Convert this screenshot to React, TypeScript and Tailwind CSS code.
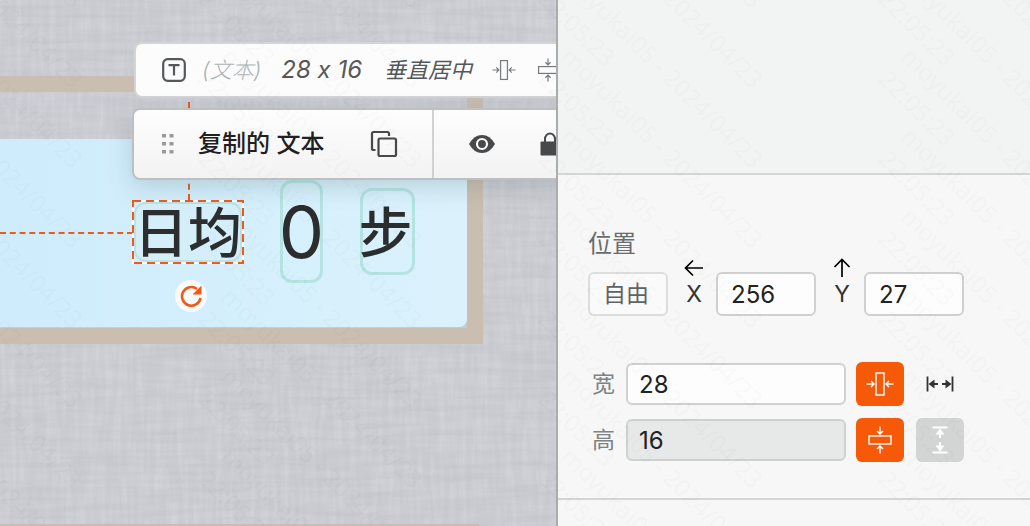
import { useState, type ReactNode } from "react";

type IconProps = { className?: string };

const cjk = "font-['Inter','Noto_Sans_CJK_SC',sans-serif]";

function ShrinkIcon({ className = "" }: IconProps) {
  return (
    <svg viewBox="0 0 28 28" className={className} fill="none" stroke="currentColor" strokeWidth="1.4" aria-hidden="true">
      <rect x="10" y="3" width="8" height="22" />
      <path d="M0.5 14H8M5 11l3 3-3 3M27.5 14H20M23 11l-3 3 3 3" />
    </svg>
  );
}

function StretchIcon({ className = "" }: IconProps) {
  return (
    <svg viewBox="0 0 28 28" className={className} fill="none" stroke="currentColor" strokeWidth="1.8" aria-hidden="true">
      <path d="M1.5 6.5v15M26.5 6.5v15M5 14h7M16 14h7" />
      <path d="M2.5 14l6-4.5v9zM25.5 14l-6-4.5v9z" fill="currentColor" stroke="none" />
    </svg>
  );
}

function TextTypeIcon() {
  return (
    <svg viewBox="0 0 24 24" className="size-6 shrink-0 text-[#55585a]" fill="none" stroke="currentColor" strokeWidth="2.2" aria-hidden="true">
      <rect x="1.2" y="1.2" width="21.6" height="21.6" rx="4.5" />
      <path d="M6.5 7.2h11M12 7v10.500" />
    </svg>
  );
}

function CopyIcon() {
  return (
    <svg viewBox="0 0 28 28" className="size-7" fill="none" stroke="currentColor" strokeWidth="2.2" aria-hidden="true">
      <path d="M5.5 20H3.5A1.5 1.5 0 0 1 2 18.5V3.500A1.500 1.500 0 0 1 3.500 2H17.500A1.500 1.500 0 0 1 19 3.500V6" />
      <rect x="8.500" y="8.500" width="17.500" height="17.500" rx="1.500" />
    </svg>
  );
}

function EyeIcon() {
  return (
    <svg viewBox="0 0 28 20" className="h-5 w-7" aria-hidden="true">
      <path d="M1 10Q6 1 14 1t13 9q-5 9-13 9T1 10z" fill="currentColor" />
      <circle cx="14" cy="10" r="5" fill="currentColor" stroke="#fbfbfb" strokeWidth="2.2" />
    </svg>
  );
}

function LockIcon() {
  return (
    <svg viewBox="0 0 20 24" className="h-6 w-5" aria-hidden="true">
      <path d="M5 10V7a5 5.500 0 0 1 10 0v3" fill="none" stroke="currentColor" strokeWidth="2" />
      <rect x="0.500" y="9.500" width="19" height="14" rx="1" fill="currentColor" />
    </svg>
  );
}

function GripIcon() {
  return (
    <svg viewBox="0 0 12 20" className="h-5 w-3 text-[#999]" fill="currentColor" aria-hidden="true">
      <path d="M0 0h4v3.500H0zM7.500 0h4v3.500h-4zM0 8h4v3.500H0zM7.500 8h4v3.500h-4zM0 16h4v3.500H0zM7.500 16h4v3.500h-4z" />
    </svg>
  );
}

function RotateIcon() {
  return (
    <svg viewBox="0 0 24 24" className="size-6" aria-hidden="true">
      <path d="M21.500 14A9.300 9.300 0 1 1 18 5" fill="none" stroke="currentColor" strokeWidth="2.600" />
      <path d="M22.500 1.500v9h-9z" fill="currentColor" />
    </svg>
  );
}

function ArrowIcon({ className = "" }: IconProps) {
  return (
    <svg viewBox="0 0 20 20" className={`size-5 text-black ${className}`} fill="none" stroke="currentColor" strokeWidth="1.700" aria-hidden="true">
      <path d="M19 10H2M9 2.500L1.500 10l7.500 7.500" />
    </svg>
  );
}

function Fabric() {
  return (
    <svg className="absolute inset-0 size-full" aria-hidden="true">
      <filter id="warp" x="0" y="0" width="100%" height="100%" colorInterpolationFilters="sRGB">
        <feTurbulence type="fractalNoise" baseFrequency="0.18 0.020" numOctaves="2" seed="4" />
        <feColorMatrix values="0 0 0 0 0.860  0 0 0 0 0.870  0 0 0 0 0.890  1.600 0 0 0 -0.600" />
      </filter>
      <filter id="weft" x="0" y="0" width="100%" height="100%" colorInterpolationFilters="sRGB">
        <feTurbulence type="fractalNoise" baseFrequency="0.014 0.160" numOctaves="2" seed="9" />
        <feColorMatrix values="0 0 0 0 0.720  0 0 0 0 0.730  0 0 0 0 0.750  1.600 0 0 0 -0.600" />
      </filter>
      <rect width="100%" height="100%" filter="url(#warp)" opacity="0.600" />
      <rect width="100%" height="100%" filter="url(#weft)" opacity="0.450" />
    </svg>
  );
}

function Watermark() {
  const marks = [];
  for (let col = -1; col < 3; col++) {
    for (let row = -3; row < 6; row++) {
      marks.push(
        <g key={`${col}:${row}`} transform={`translate(${220 + col * 340} ${58 + row * 80}) rotate(45)`}>
          <text>moyukai05 - 2024/04/23</text>
          <text y="32">22:05:23</text>
        </g>,
      );
    }
  }
  return (
    <svg className="pointer-events-none fixed inset-0 size-full fill-black font-['Noto_Sans',sans-serif] text-[24px] opacity-[0.015]" aria-hidden="true">
      {marks}
    </svg>
  );
}

function CanvasArea() {
  return (
    <main className="relative min-w-0 flex-1 overflow-hidden bg-[#cbccd2]">
      <Fabric />

      <div className="absolute top-[76px] -left-4 h-[268px] w-[499px] border-16 border-[#cabeb0]" />
      <div className="absolute top-[524px] -left-4 h-40 w-[495px] border-16 border-[#cabeb0]" />
      <div className="absolute top-[139px] left-0 h-[188px] w-[467px] rounded-br-lg bg-linear-to-r from-[#ceecfc] to-[#dbf2fc]" />

      <div className="absolute top-[232px] left-0 w-[133px] border-t-2 border-dashed border-[#ef5a1c]" />
      <div className="absolute top-[102px] left-[188px] h-[98px] border-l-2 border-dashed border-[#ef5a1c]" />

      <div className="absolute top-[200px] left-[132px] flex h-16 w-28 items-center justify-center bg-[#d5effa] font-['Noto_Sans_CJK_SC',sans-serif] text-[54px] leading-none font-medium text-[#2b2d2e]">
        <span className="absolute inset-0.5 rounded-xl border-2 border-[#b9e3e6]" />
        <span className="relative pb-1 whitespace-nowrap">日均</span>
        <svg className="absolute inset-0 size-full" fill="none" strokeWidth="2" aria-hidden="true">
          <rect x="1" y="1" width="110" height="62" stroke="#fff" />
          <rect x="1" y="1" width="110" height="62" stroke="#ef5a1c" strokeDasharray="8 5" />
        </svg>
      </div>
      <div className="absolute top-[180px] left-[280px] flex h-[103px] w-[43px] items-center justify-center rounded-xl border-3 border-[#b5e3e2] font-['Inter',sans-serif] text-[72px] leading-none text-[#2b2d2e]">
        0
      </div>
      <div className="absolute top-[188px] left-[360px] flex h-[87px] w-[55px] items-center justify-center rounded-xl border-3 border-[#b5e3e2] pr-1 pb-1 font-['Noto_Sans_CJK_SC',sans-serif] text-[54px] leading-none font-medium text-[#2b2d2e]">
        步
      </div>

      <button type="button" aria-label="旋转" className="absolute top-[280px] left-[175px] flex size-8 items-center justify-center rounded-full bg-[#f9fcfd] text-[#f25a13]">
        <RotateIcon />
      </button>

      <div className={`absolute top-[42px] left-[134px] flex h-14 w-[480px] items-center rounded-lg border-2 border-[#d3d4d5] bg-[#fcfcfc] pl-[26px] text-[22px] whitespace-nowrap text-[#55585a] italic [font-feature-settings:'calt'_0] ${cjk}`}>
        <TextTypeIcon />
        <span className="ml-4 font-light text-[#b0b3b4]">(文本)</span>
        <span className="ml-5 text-[24px]">28 x 16</span>
        <span className="ml-[22px]">垂直居中</span>
        <ShrinkIcon className="ml-5 size-6 shrink-0 text-[#777a7c]" />
        <ShrinkIcon className="ml-5 size-6 shrink-0 rotate-90 text-[#777a7c]" />
      </div>

      <div className="absolute top-[108px] left-[132px] flex h-[72px] w-[480px] rounded-lg border-2 border-[#bebfc0] bg-linear-to-b from-[#fdfdfd] to-[#f3f3f3] text-[#48494b] shadow-[0_6px_24px_rgba(60,90,90,0.22)]">
        <div className="flex w-[300px] shrink-0 items-center border-r-2 border-[#d0d1d2] pl-7">
          <GripIcon />
          <span className={`ml-6 text-[24px] leading-8 font-medium whitespace-nowrap text-[#1f2021] ${cjk}`}>复制的 文本</span>
          <button type="button" aria-label="复制" className="mr-[34px] ml-auto">
            <CopyIcon />
          </button>
        </div>
        <button type="button" aria-label="显示" className="ml-[34px]">
          <EyeIcon />
        </button>
        <button type="button" aria-label="锁定" className="ml-11">
          <LockIcon />
        </button>
      </div>
    </main>
  );
}

function PositionField({ id, label, arrow, initial }: { id: string; label: string; arrow: ReactNode; initial: string }) {
  const [value, setValue] = useState(initial);
  return (
    <>
      <label htmlFor={id} className="mb-1.5 flex w-12 flex-col items-center pl-1 text-[23px] leading-8 text-[#333]">
        {arrow}
        {label}
      </label>
      <input
        id={id}
        value={value}
        onChange={(e) => setValue(e.target.value)}
        className="h-11 w-[100px] rounded-md border-2 border-[#cfd0d0] bg-[#fdfdfd] px-[13px] text-[24px] text-[#222]"
      />
    </>
  );
}

function SizeField({ id, label, initial, disabled, children }: { id: string; label: string; initial: string; disabled?: boolean; children: ReactNode }) {
  const [value, setValue] = useState(initial);
  return (
    <div className="flex h-11 items-center pl-1">
      <label htmlFor={id} className="w-6 text-[23px] text-[#808384]">
        {label}
      </label>
      <input
        id={id}
        value={value}
        readOnly={disabled}
        onChange={(e) => setValue(e.target.value)}
        className="ml-2.5 h-[42px] w-[220px] rounded-md border-2 border-[#cfd1d1] bg-[#fdfdfd] px-[11px] text-[24px] text-[#222] read-only:bg-[#e7e8e8]"
      />
      {children}
    </div>
  );
}

function Inspector() {
  return (
    <aside className={`flex w-[474px] shrink-0 flex-col border-l-2 border-[#a9adaf] bg-[#f7f7f7] ${cjk}`}>
      <div className="h-[175px] border-b-2 border-[#d4d6d6] bg-[#f2f3f3]" />
      <section className="border-b-2 border-[#d4d6d6] pt-[55px] pb-9 pl-[30px]">
        <h2 className="text-[24px] leading-7 text-[#6a6c6d]">位置</h2>
        <div className="flex items-end">
          <button type="button" className="h-11 w-20 rounded-md border-2 border-[#dcdddd] bg-[#fafafa] pr-1 text-[23px] text-[#606365]">
            自由
          </button>
          <PositionField id="pos-x" label="X" initial="256" arrow={<ArrowIcon />} />
          <PositionField id="pos-y" label="Y" initial="27" arrow={<ArrowIcon className="rotate-90" />} />
        </div>
        <div className="mt-[46px] flex flex-col gap-3">
          <SizeField id="width" label="宽" initial="28">
            <button type="button" aria-label="宽度适应内容" className="ml-2.5 flex h-11 w-12 items-center justify-center rounded-md bg-[#f65a08] text-white">
              <ShrinkIcon className="size-7" />
            </button>
            <button type="button" aria-label="宽度填满" className="ml-3 flex h-11 w-12 items-center justify-center rounded-md text-[#333]">
              <StretchIcon className="size-7" />
            </button>
          </SizeField>
          <SizeField id="height" label="高" initial="16" disabled>
            <button type="button" aria-label="高度适应内容" className="ml-2.5 flex h-11 w-12 items-center justify-center rounded-md bg-[#f65a08] text-white">
              <ShrinkIcon className="size-7 rotate-90" />
            </button>
            <button type="button" disabled aria-label="高度填满" className="ml-3 flex h-11 w-12 items-center justify-center rounded-md bg-[#d3d5d5] text-white">
              <StretchIcon className="size-7 rotate-90" />
            </button>
          </SizeField>
        </div>
      </section>
    </aside>
  );
}

export default function App() {
  return (
    <div className="flex min-h-screen">
      <CanvasArea />
      <Inspector />
      <Watermark />
    </div>
  );
}
